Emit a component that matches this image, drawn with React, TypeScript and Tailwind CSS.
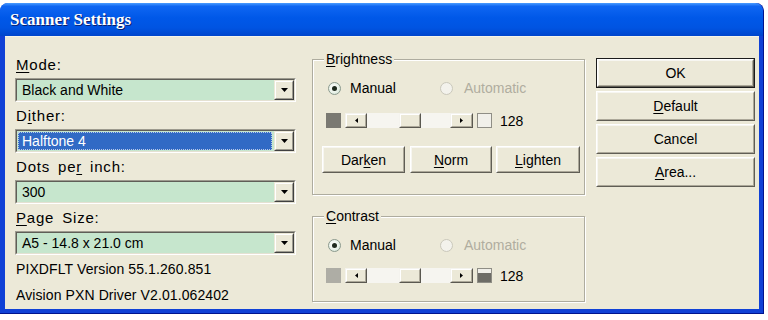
import React from 'react';

function U({ children }: { children: React.ReactNode }) {
  return <span className="underline underline-offset-[2px] decoration-1">{children}</span>;
}

function DownArrow() {
  return (
    <svg width="7" height="4" viewBox="0 0 7 4">
      <path d="M0 0H7L3.5 4Z" fill="#000" />
    </svg>
  );
}

function DropBtn() {
  return (
    <div className="w-[20px] h-[20px] border border-t-[#ece9d8] border-l-[#ece9d8] border-b-[#404040] border-r-[#404040] bg-[#ece9d8]">
      <div className="w-full h-full border border-t-white border-l-white border-b-[#9d9b8f] border-r-[#9d9b8f] flex items-center justify-center">
        <DownArrow />
      </div>
    </div>
  );
}

function Combo({ text, selected }: { text: string; selected?: boolean }) {
  return (
    <div className="h-[24px] w-[281px] border border-t-[#9d9b8f] border-l-[#9d9b8f] border-b-white border-r-white">
      <div className="h-full w-full border border-t-[#5f5e57] border-l-[#5f5e57] border-b-[#e4e1d2] border-r-[#e4e1d2] bg-[#c6e6cd] flex items-center">
        {selected ? (
          <div className="flex-1 h-[18px] ml-[1px] mr-[2px] bg-[#316ac5] border border-dotted border-[#b8c8e8] text-white flex items-center pl-[3px] leading-none">
            {text}
          </div>
        ) : (
          <div className="flex-1 pl-[5px] leading-none">{text}</div>
        )}
        <DropBtn />
      </div>
    </div>
  );
}

function Btn({ className, children, isDefault }: { className: string; children: React.ReactNode; isDefault?: boolean }) {
  return (
    <div className={`${className} ${isDefault ? 'border border-[#1b1b1b]' : ''}`}>
      <div className="w-full h-full border border-t-white border-l-white border-b-[#605e55] border-r-[#605e55] bg-[#ece9d8]">
        <div className="w-full h-full border border-t-[#f7f6f1] border-l-[#f7f6f1] border-b-[#aca899] border-r-[#aca899] flex items-center justify-center leading-none">
          {children}
        </div>
      </div>
    </div>
  );
}

function SmallArrow({ dir }: { dir: 'l' | 'r' }) {
  return (
    <svg width="3" height="5" viewBox="0 0 3 5">
      {dir === 'l' ? <path d="M3 0V5L0 2.5Z" fill="#000" /> : <path d="M0 0V5L3 2.5Z" fill="#000" />}
    </svg>
  );
}

function ScrollBtn({ className, children }: { className: string; children?: React.ReactNode }) {
  return (
    <div className={`${className} h-[15px] border border-t-[#f4f3ee] border-l-[#f4f3ee] border-b-[#5a5850] border-r-[#5a5850] bg-[#ece9d8]`}>
      <div className="w-full h-full border border-t-white border-l-white border-b-[#aca899] border-r-[#aca899] flex items-center justify-center">
        {children}
      </div>
    </div>
  );
}

function Slider({ contrast }: { contrast?: boolean }) {
  return (
    <div className="flex items-center h-[15px] ml-[13px]">
      <div className={`w-[15px] h-[15px] ${contrast ? 'bg-[#aeada5]' : 'bg-[#7a7972]'}`} />
      <ScrollBtn className="w-[22px] ml-[4px]">
        <SmallArrow dir="l" />
      </ScrollBtn>
      <div className="w-[83px] h-[15px] bg-[#f6f5f0] flex items-center">
        <ScrollBtn className="w-[22px] ml-[32px]" />
      </div>
      <ScrollBtn className="w-[23px]">
        <SmallArrow dir="r" />
      </ScrollBtn>
      {contrast ? (
        <div className="w-[15px] h-[15px] ml-[4px] border border-[#8f8e86] bg-[#efeee8] flex flex-col justify-end">
          <div className="h-[9px] bg-[#6d6c66]" />
        </div>
      ) : (
        <div className="w-[15px] h-[15px] ml-[4px] border border-[#8f8e86] bg-[#f1f0ea]" />
      )}
      <span className="ml-[8px] leading-none">128</span>
    </div>
  );
}

function Radio({ on, disabled }: { on?: boolean; disabled?: boolean }) {
  return (
    <div
      className={`w-[13px] h-[13px] rounded-full border flex items-center justify-center ${
        disabled ? 'border-[#cac8bb] bg-[#f3f2ec]' : 'border-[#8b9a8e] bg-[radial-gradient(circle_at_40%_40%,#ffffff_0%,#e6f0e6_60%,#c9dccb_100%)]'
      }`}
    >
      {on && <div className="w-[5px] h-[5px] rounded-full bg-[#1e2a1e]" />}
    </div>
  );
}

function RadioRow() {
  return (
    <div className="flex items-center h-[18px]">
      <div className="ml-[15px]">
        <Radio on />
      </div>
      <span className="ml-[9px] leading-none">Manual</span>
      <div className="ml-[44px]">
        <Radio disabled />
      </div>
      <span className="ml-[11px] leading-none text-[#b0ad9f]">Automatic</span>
    </div>
  );
}

function Group({ label, className, children }: { label: React.ReactNode; className: string; children: React.ReactNode }) {
  return (
    <div className={`relative border border-[#aeac9f] shadow-[inset_1px_1px_0_#ffffff,1px_1px_0_#ffffff] ${className}`}>
      <div className="absolute -top-[9px] left-[11px] bg-[#ece9d8] px-[2px] leading-[17px]">{label}</div>
      {children}
    </div>
  );
}

const labelCls = 'leading-[17px] pl-[1px] text-[15px] tracking-[0.8px] [word-spacing:3px]';

export default function App() {
  return (
    <div className="w-[768px] h-[320px] bg-white font-['Liberation_Sans',Arial,sans-serif] text-[14px] text-black overflow-hidden">
      <div className="mt-[3px] w-[764px] h-[311px] flex flex-col bg-[#1041d6] rounded-t-[8px] border-r border-b border-[#00148e]">
        <div className="h-[33px] shrink-0 rounded-t-[8px] bg-[linear-gradient(to_bottom,#4a9cff_0%,#0f66f2_10%,#0058e8_45%,#0054e2_75%,#0046cc_100%)] flex items-center pl-[10px]">
          <span className="font-['Liberation_Serif',serif] font-bold text-[17px] text-white [text-shadow:1px_1px_0_#0a1f6e]">
            Scanner Settings
          </span>
        </div>
        <div className="flex-1 ml-[5px] mr-[4px] mb-[4px] bg-[#ece9d8] border-t border-[#f6f4ea] flex pl-[10px]">
          {/* Left column */}
          <div className="w-[281px] flex flex-col pt-[19px]">
            <div className={labelCls}>
              <U>M</U>ode:
            </div>
            <div className="mt-[5px]">
              <Combo text="Black and White" />
            </div>
            <div className={`${labelCls} mt-[5px]`}>
              D<U>i</U>ther:
            </div>
            <div className="mt-[5px]">
              <Combo text="Halftone 4" selected />
            </div>
            <div className={`${labelCls} mt-[5px]`}>
              Dots pe<U>r</U> inch:
            </div>
            <div className="mt-[5px]">
              <Combo text="300" />
            </div>
            <div className={`${labelCls} mt-[5px]`}>
              <U>P</U>age Size:
            </div>
            <div className="mt-[5px]">
              <Combo text="A5 - 14.8 x 21.0 cm" />
            </div>
            <div className="leading-[18px] pl-[1px] mt-[5px] tracking-[0.1px]">PIXDFLT Version 55.1.260.851</div>
            <div className="leading-[18px] pl-[1px] mt-[8px] tracking-[0.1px]">Avision PXN Driver V2.01.062402</div>
          </div>

          {/* Middle column */}
          <div className="w-[273px] ml-[16px] flex flex-col pt-[22px]">
            <Group
              className="h-[136px]"
              label={
                <>
                  <U>B</U>rightness
                </>
              }
            >
              <div className="pt-[19px]">
                <RadioRow />
              </div>
              <div className="mt-[16px]">
                <Slider />
              </div>
              <div className="mt-[18px] flex ml-[9px]">
                <Btn className="w-[83px] h-[27px]">
                  Dar<U>k</U>en
                </Btn>
                <Btn className="w-[82px] h-[27px] ml-[5px]">
                  <U>N</U>orm
                </Btn>
                <Btn className="w-[84px] h-[27px] ml-[4px]">
                  <U>L</U>ighten
                </Btn>
              </div>
            </Group>
            <Group
              className="h-[86px] mt-[21px]"
              label={
                <>
                  <U>C</U>ontrast
                </>
              }
            >
              <div className="pt-[19px]">
                <RadioRow />
              </div>
              <div className="mt-[14px]">
                <Slider contrast />
              </div>
            </Group>
          </div>

          {/* Right column */}
          <div className="w-[159px] ml-[11px] flex flex-col pt-[21px] gap-[3px]">
            <Btn className="w-[159px] h-[30px]" isDefault>
              OK
            </Btn>
            <Btn className="w-[159px] h-[30px]">
              <U>D</U>efault
            </Btn>
            <Btn className="w-[159px] h-[30px]">Cancel</Btn>
            <Btn className="w-[159px] h-[30px]">
              <U>A</U>rea...
            </Btn>
          </div>
        </div>
      </div>
    </div>
  );
}
